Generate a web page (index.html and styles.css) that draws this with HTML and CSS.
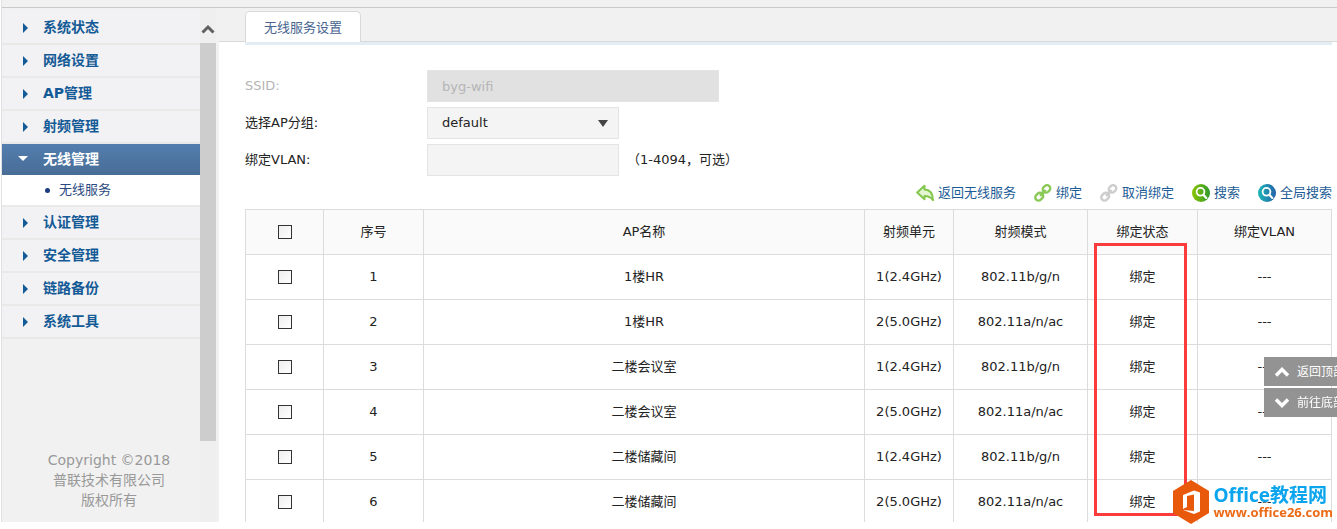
FILE: index.html
```html
<!DOCTYPE html>
<html lang="zh-CN">
<head>
  <meta charset="UTF-8">
  <meta name="viewport" content="width=device-width, initial-scale=1.0">
  <title>无线服务设置</title>
  <link rel="stylesheet" href="styles.css">
</head>
<body>
  <!-- shared icons -->
  <svg class="defs" width="0" height="0" aria-hidden="true">
    <symbol id="icon-link" viewBox="0 0 18 18">
      <g fill="none" stroke="currentColor" stroke-width="2.400">
        <rect x="8.500" y="1.700" width="8" height="6.400" rx="3.200" transform="rotate(-45 12.500 4.900)"/>
        <rect x="1" y="9.500" width="8.500" height="6.400" rx="3.200" transform="rotate(-45 5.200 12.700)"/>
        <path d="M6 11.800l5.800-5.800"/>
      </g>
    </symbol>
  </svg>

  <div class="page">
    <header class="topbar"></header>

    <div class="layout">
      <aside class="sidebar">
        <div class="sidebar-body">
          <nav>
            <ul class="menu">
              <li><a href="#">系统状态</a></li>
              <li><a href="#">网络设置</a></li>
              <li><a href="#">AP管理</a></li>
              <li><a href="#">射频管理</a></li>
              <li class="open">
                <a href="#">无线管理</a>
                <ul class="submenu">
                  <li><a href="#">无线服务</a></li>
                </ul>
              </li>
              <li><a href="#">认证管理</a></li>
              <li><a href="#">安全管理</a></li>
              <li><a href="#">链路备份</a></li>
              <li><a href="#">系统工具</a></li>
            </ul>
          </nav>
          <footer class="copyright">
            Copyright ©2018<br>普联技术有限公司<br>版权所有
          </footer>
        </div>
        <div class="scrollbar">
          <button type="button" class="scroll-up" aria-label="向上滚动">
            <svg width="14" height="10" viewBox="0 0 14 10"><path d="M1.500 8.500L7 3l5.500 5.500" fill="none" stroke="#606060" stroke-width="3"/></svg>
          </button>
          <div class="scroll-track"><div class="scroll-thumb"></div></div>
        </div>
      </aside>

      <main class="content">
        <div class="tabs">
          <a class="tab" href="#">无线服务设置</a>
        </div>

        <div class="panel">
          <form class="settings">
            <div class="row disabled">
              <label for="ssid">SSID:</label>
              <input type="text" id="ssid" class="wide" value="byg-wifi" disabled>
            </div>
            <div class="row">
              <label for="group">选择AP分组:</label>
              <div class="select">
                <select id="group">
                  <option>default</option>
                </select>
              </div>
            </div>
            <div class="row">
              <label for="vlan">绑定VLAN:</label>
              <input type="text" id="vlan">
              <span class="hint">（1-4094，可选）</span>
            </div>
          </form>

          <div class="toolbar">
            <a href="#">
              <svg width="18" height="18" viewBox="0 0 18 18"><path d="M1.200 8.500L8.500 1.700v3.900c5.500.2 8.300 3.600 8.500 10.700-2-3-4.500-4.200-8.500-4.200v3.200z" fill="#e4f5d4" stroke="#84c74d" stroke-width="2" stroke-linejoin="round"/></svg>
              返回无线服务
            </a>
            <a href="#">
              <svg class="green" width="18" height="18"><use href="#icon-link"/></svg>
              绑定
            </a>
            <a href="#">
              <svg class="gray" width="18" height="18"><use href="#icon-link"/></svg>
              取消绑定
            </a>
            <a href="#">
              <svg width="18" height="18" viewBox="0 0 18 18">
                <linearGradient id="grad-green"><stop offset="0" stop-color="#8cc400"/><stop offset="1" stop-color="#2e9a2e"/></linearGradient>
                <circle cx="9" cy="9" r="9" fill="url(#grad-green)"/>
                <circle cx="8.500" cy="7.800" r="3.900" fill="none" stroke="#fff" stroke-width="1.800"/>
                <path d="M11.300 10.700l3 3.200" stroke="#fff" stroke-width="2.200" stroke-linecap="round"/>
              </svg>
              搜索
            </a>
            <a href="#">
              <svg width="18" height="18" viewBox="0 0 18 18">
                <linearGradient id="grad-blue"><stop offset="0" stop-color="#1db6b6"/><stop offset="1" stop-color="#2463ab"/></linearGradient>
                <circle cx="9" cy="9" r="9" fill="url(#grad-blue)"/>
                <circle cx="8.500" cy="7.800" r="3.900" fill="none" stroke="#fff" stroke-width="1.800"/>
                <path d="M11.300 10.700l3 3.200" stroke="#fff" stroke-width="2.200" stroke-linecap="round"/>
              </svg>
              全局搜索
            </a>
          </div>

          <div class="table-wrap">
            <table>
              <colgroup>
                <col class="c-check"><col class="c-num"><col><col class="c-unit"><col class="c-mode"><col class="c-state"><col class="c-vlan">
              </colgroup>
              <thead>
                <tr>
                  <th><input type="checkbox" aria-label="全选"></th>
                  <th>序号</th>
                  <th>AP名称</th>
                  <th>射频单元</th>
                  <th>射频模式</th>
                  <th>绑定状态</th>
                  <th>绑定VLAN</th>
                </tr>
              </thead>
              <tbody>
                <tr>
                  <td><input type="checkbox" aria-label="选择 1"></td>
                  <td>1</td><td>1楼HR</td><td>1(2.4GHz)</td><td>802.11b/g/n</td><td>绑定</td><td>---</td>
                </tr>
                <tr>
                  <td><input type="checkbox" aria-label="选择 2"></td>
                  <td>2</td><td>1楼HR</td><td>2(5.0GHz)</td><td>802.11a/n/ac</td><td>绑定</td><td>---</td>
                </tr>
                <tr>
                  <td><input type="checkbox" aria-label="选择 3"></td>
                  <td>3</td><td>二楼会议室</td><td>1(2.4GHz)</td><td>802.11b/g/n</td><td>绑定</td><td>---</td>
                </tr>
                <tr>
                  <td><input type="checkbox" aria-label="选择 4"></td>
                  <td>4</td><td>二楼会议室</td><td>2(5.0GHz)</td><td>802.11a/n/ac</td><td>绑定</td><td>---</td>
                </tr>
                <tr>
                  <td><input type="checkbox" aria-label="选择 5"></td>
                  <td>5</td><td>二楼储藏间</td><td>1(2.4GHz)</td><td>802.11b/g/n</td><td>绑定</td><td>---</td>
                </tr>
                <tr>
                  <td><input type="checkbox" aria-label="选择 6"></td>
                  <td>6</td><td>二楼储藏间</td><td>2(5.0GHz)</td><td>802.11a/n/ac</td><td>绑定</td><td>---</td>
                </tr>
              </tbody>
            </table>
            <div class="highlight"></div>
          </div>
        </div>
      </main>
    </div>
  </div>

  <div class="jump">
    <button type="button">
      <svg width="16" height="12" viewBox="0 0 16 12"><path d="M2 9.500l6-6 6 6" fill="none" stroke="#fff" stroke-width="3.500"/></svg>
      返回顶部
    </button>
    <button type="button">
      <svg width="16" height="12" viewBox="0 0 16 12"><path d="M2 2.500l6 6 6-6" fill="none" stroke="#fff" stroke-width="3.500"/></svg>
      前往底部
    </button>
  </div>

  <div class="watermark">
    <svg width="36" height="44" viewBox="0 0 36 44">
      <path d="M18 0l18 11v22L18 44 0 33V11z" fill="#e9590c"/>
      <path d="M10 15l11-4.500 6 2v19l-6 2.500-11-4 11 1V14.500l-7 1.500v11l-4 2z" fill="#fff"/>
    </svg>
    <div>
      <div class="mark-name">Office教程网</div>
      <div class="mark-url">www.office26.com</div>
    </div>
  </div>
</body>
</html>
```
FILE: styles.css
```css
* {
  box-sizing: border-box;
}

body {
  margin: 0;
  height: 100vh;
  overflow: hidden;
  background: #fff;
  color: #222;
  font-family: "DejaVu Sans", "Noto Sans CJK SC", sans-serif;
  font-size: 13px;
  line-height: 20px;
}

a {
  color: #1d5c96;
  text-decoration: none;
}

ul {
  list-style: none;
  margin: 0;
  padding: 0;
}

input,
select,
button {
  font: inherit;
  color: inherit;
}

.defs {
  position: absolute;
}

.page {
  display: flex;
  flex-direction: column;
  height: calc(100vh - 7px);
  margin-left: 1px;
  border-left: 1px solid #e0e0e0;
  overflow: hidden;
}

.topbar {
  flex: none;
  height: 8px;
  background: #f1f1f1;
  border-bottom: 1px solid #c9c9c9;
}

.layout {
  display: flex;
  flex: 1;
  min-height: 0;
}

/* sidebar */
.sidebar {
  display: flex;
  flex: none;
  width: 217px;
  background: #f1f1f1;
}

.sidebar-body {
  display: flex;
  flex-direction: column;
  justify-content: space-between;
  width: 198px;
  padding: 2px 0 12px;
}

.menu > li > a {
  display: flex;
  align-items: center;
  height: 33px;
  padding: 0 0 2px 21px;
  border-top: 2px solid #e9e9e7;
  background: #f2f2f4;
  color: #145a96;
  font-size: 14px;
  font-weight: bold;
}

.menu > li:first-child > a {
  border-top-color: #f2f2f4;
}

.menu > li:last-child {
  border-bottom: 2px solid #e9e9e7;
}

.menu > li > a::before {
  content: "";
  margin: 2px 15px 0 0;
  border: 5px solid transparent;
  border-left-color: #145a96;
  border-right: 0;
}

.menu > .open > a {
  padding-left: 16px;
  background: linear-gradient(#537eae, #486d97) padding-box;
  color: #fff;
}

.menu > .open > a::before {
  margin-top: 0;
  border: 5px solid transparent;
  border-top-color: #fff;
  border-bottom: 0;
}

.submenu a {
  display: flex;
  align-items: center;
  height: 30px;
  padding-left: 43px;
  background: #fff;
  color: #2c4a82;
}

.submenu a::before {
  content: "";
  width: 5px;
  height: 5px;
  margin-right: 9px;
  border-radius: 50%;
  background: #1b3a80;
}

.copyright {
  padding-left: 16px;
  color: #999;
  font-size: 14px;
  text-align: center;
}

.scrollbar {
  display: flex;
  flex-direction: column;
  width: 16px;
  background: #efefef;
}

.scroll-up {
  flex: none;
  height: 35px;
  padding: 8px 0 0;
  border: 0;
  background: none;
}

.scroll-track {
  flex: 1;
}

.scroll-thumb {
  height: 83%;
  background: #cdcdcd;
}

/* content */
.content {
  flex: 1;
  min-width: 0;
}

.tabs {
  display: flex;
  align-items: flex-end;
  height: 34px;
  padding-left: 26px;
  border-bottom: 1px solid #d9d9d9;
  background: #f1f1f1;
}

.tab {
  height: 31px;
  margin-bottom: -1px;
  padding: 6px 18px;
  border: 1px solid #d9d9d9;
  border-bottom: 0;
  border-radius: 5px 5px 0 0;
  background: #fff;
  color: #48648f;
}

.panel {
  margin: 0 5px 0 26px;
  border-top: 3px solid #e3edf4;
}

.settings {
  display: flex;
  flex-direction: column;
  gap: 5px;
  padding-top: 25px;
}

.row {
  display: flex;
  align-items: center;
}

.row label {
  width: 182px;
}

.row input,
.row select {
  width: 192px;
  height: 32px;
  padding: 0 14px;
  border: 1px solid #e4e4e4;
  border-radius: 0;
  background: #f4f4f4;
  outline: none;
}

.row .wide {
  width: 292px;
}

.disabled,
.row input:disabled {
  color: #b5b5b5;
}

.row input:disabled {
  background: #e1e1e1;
}

.select {
  position: relative;
}

.select select {
  display: block;
  appearance: none;
}

.select::after {
  content: "";
  position: absolute;
  top: 13px;
  right: 11px;
  border: 5px solid transparent;
  border-top: 7px solid #444;
  border-bottom: 0;
  pointer-events: none;
}

.hint {
  margin-left: 8px;
}

.toolbar {
  display: flex;
  align-items: center;
  justify-content: flex-end;
  gap: 18px;
  height: 33px;
}

.toolbar a {
  display: flex;
  align-items: center;
  gap: 4px;
  white-space: nowrap;
}

.green {
  color: #8bc957;
}

.gray {
  color: #cdcdcd;
}

/* table */
.table-wrap {
  position: relative;
}

table {
  width: 100%;
  table-layout: fixed;
  border-collapse: collapse;
}

th,
td {
  height: 45px;
  padding: 0 0 1px;
  border: 1px solid #dcdcdc;
  font-weight: normal;
  text-align: center;
}

th {
  background: #fafafa;
}

.c-check { width: 78px; }
.c-num { width: 100px; }
.c-unit { width: 89px; }
.c-mode { width: 134px; }
.c-state { width: 110px; }
.c-vlan { width: 134px; }

table input {
  display: block;
  appearance: none;
  width: 14px;
  height: 14px;
  margin: 0 auto;
  border: 1px solid #333;
  background: linear-gradient(135deg, #eee, #fff);
}

.highlight {
  position: absolute;
  top: 34px;
  right: 145px;
  width: 93px;
  height: 273px;
  border: 3px solid #fa3c3c;
  pointer-events: none;
}

/* floating parts */
.jump {
  position: fixed;
  top: 357px;
  right: 0;
  display: flex;
  flex-direction: column;
  gap: 2px;
  width: 73px;
}

.jump button {
  display: flex;
  align-items: center;
  gap: 7px;
  height: 29px;
  padding: 0 0 0 10px;
  border: 0;
  background: #939393;
  color: #fff;
  font-size: 12px;
  white-space: nowrap;
  overflow: hidden;
}

.jump svg {
  flex: none;
}

.watermark {
  position: fixed;
  right: 4px;
  bottom: 5px;
  display: flex;
  align-items: center;
  gap: 4px;
  font-family: "Open Sans", "Noto Sans CJK SC", sans-serif;
  font-weight: bold;
  text-shadow: 0 0 1px #fff, 0 0 2px #fff;
}

.mark-name {
  color: #0ba5ee;
  font-size: 19px;
  line-height: 20px;
}

.mark-url {
  color: #ec6a16;
  font-size: 13px;
  line-height: 14px;
}
```
